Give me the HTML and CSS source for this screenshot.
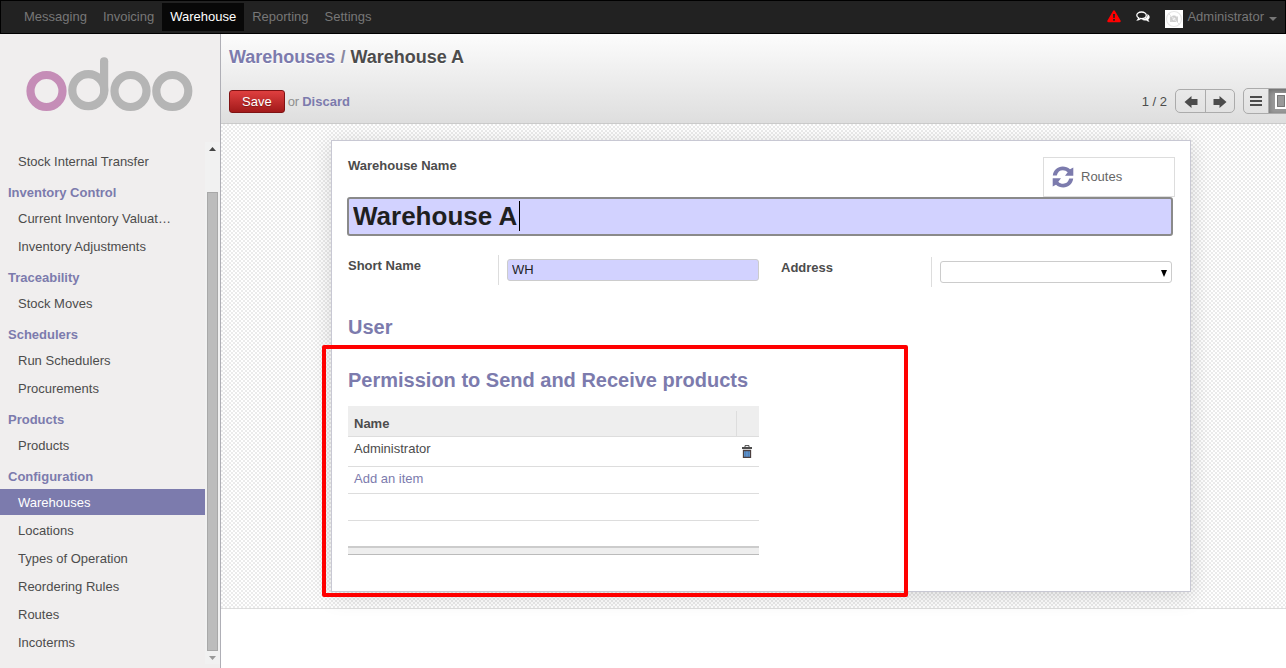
FILE: index.html
```html
<!DOCTYPE html>
<html lang="en">
<head>
<meta charset="utf-8">
<title>Warehouse A - Odoo</title>
<link rel="stylesheet" href="styles.css">
</head>
<body>
<header class="topbar">
  <nav class="topbar-menu" aria-label="Applications">
    <a href="#messaging">Messaging</a>
    <a href="#invoicing">Invoicing</a>
    <a href="#warehouse" class="active">Warehouse</a>
    <a href="#reporting">Reporting</a>
    <a href="#settings">Settings</a>
  </nav>
  <div class="systray">
    <button type="button" class="icon-btn" aria-label="Warnings">
      <svg width="14" height="14" viewBox="0 0 14 14"><path d="M7 .2Q7.600.2 8 1L13.700 10.800Q14 12.200 12.800 12.200H1.200Q0 12.200.3 10.800L6 1Q6.400.2 7 .2Z" fill="#f00"/><path d="M6 4H8L7.700 8H6.300ZM6.100 9H7.900V10.800H6.100Z" fill="#222"/></svg>
    </button>
    <button type="button" class="icon-btn" aria-label="Messages">
      <svg width="14" height="14" viewBox="0 0 14 14"><path d="M11.200 4C13 4.700 14 6 13.600 7.700Q13.300 8.800 12.300 9.500Q12.600 10.800 13.600 11.700Q11.800 11.700 10.400 10.400Q7.500 10.900 5.500 9.500Q9.500 9.400 11 7Q11.800 5.500 11.200 4Z" fill="#fff"/><path d="M5.500 2C8.300 2 10.300 3.400 10.300 5.300S8.300 8.600 5.500 8.600L4.500 8.500Q3.300 9.600 1.900 9.800Q2.600 9 2.700 7.900Q.8 7 .8 5.300C.8 3.400 2.800 2 5.500 2Z" fill="#222" stroke="#fff" stroke-width="1.300"/></svg>
    </button>
    <button type="button" class="user-btn">
      <svg class="avatar" width="18" height="18" viewBox="0 0 18 18"><rect width="18" height="18" fill="#fff"/><circle cx="9" cy="9" r="7.500" fill="none" stroke="#e6e6e6" stroke-width="1.200"/><path d="M5 6.500H7L7.700 5.500H10.300L11 6.500H13V12H5Z" fill="#d2d2d2"/><circle cx="9" cy="9" r="2" fill="#f4f4f4" stroke="#bbb" stroke-width=".6"/><path d="M3.700 3.700L14.300 14.300" stroke="#e6e6e6"/></svg>
      <span>Administrator</span>
      <svg class="caret" width="8" height="4" viewBox="0 0 8 4"><path d="M0 0H8L4 4Z" fill="#777"/></svg>
    </button>
  </div>
</header>

<div class="client">
  <aside class="sidebar">
    <a class="logo" href="#home" aria-label="Odoo">
      <svg width="168" height="56" viewBox="0 0 168 56" fill="none" stroke-width="8.200"><circle cx="20.500" cy="34" r="16" stroke="#c58db7"/><g stroke="#b5b5b5"><circle cx="62.300" cy="33.200" r="16"/><circle cx="104.500" cy="34" r="16"/><circle cx="146.300" cy="34" r="16"/><path d="M78.100 4.300V34" stroke-linecap="round"/></g></svg>
    </a>
    <div class="menu-scroll">
      <nav class="menu" aria-label="Warehouse">
        <a href="#transfer">Stock Internal Transfer</a>
        <h2>Inventory Control</h2>
        <a href="#valuation">Current Inventory Valuat…</a>
        <a href="#adjustments">Inventory Adjustments</a>
        <h2>Traceability</h2>
        <a href="#moves">Stock Moves</a>
        <h2>Schedulers</h2>
        <a href="#run">Run Schedulers</a>
        <a href="#procurements">Procurements</a>
        <h2>Products</h2>
        <a href="#products">Products</a>
        <h2>Configuration</h2>
        <a href="#warehouses" class="active">Warehouses</a>
        <a href="#locations">Locations</a>
        <a href="#types">Types of Operation</a>
        <a href="#rules">Reordering Rules</a>
        <a href="#routes">Routes</a>
        <a href="#incoterms">Incoterms</a>
      </nav>
      <div class="scrollbar" aria-hidden="true">
        <svg width="7" height="4" viewBox="0 0 7 4"><path d="M0 4L3.500 0L7 4Z" fill="#444"/></svg>
        <div class="thumb"></div>
        <svg width="7" height="4" viewBox="0 0 7 4"><path d="M0 0L3.500 4L7 0Z" fill="#999"/></svg>
      </div>
    </div>
  </aside>

  <main class="view">
    <div class="control-panel">
      <h1 class="breadcrumb"><a href="#warehouses">Warehouses</a> <span class="sep">/</span> Warehouse A</h1>
      <div class="actions">
        <div class="save-group">
          <button type="button" class="save">Save</button>
          <span class="or">or</span>
          <a href="#discard" class="discard">Discard</a>
        </div>
        <div class="pager">
          <span class="count">1 / 2</span>
          <div class="button-group">
            <button type="button" aria-label="Previous"><svg width="14" height="12" viewBox="0 0 14 12"><path d="M.5 6L7.500 0V3H13.500V9H7.500V12Z" fill="#4c4c4c"/></svg></button>
            <button type="button" aria-label="Next"><svg width="14" height="12" viewBox="0 0 14 12"><path d="M13.500 6L6.500 0V3H.5V9H6.500V12Z" fill="#4c4c4c"/></svg></button>
          </div>
          <div class="button-group switcher">
            <button type="button" aria-label="List view"><svg width="12" height="10" viewBox="0 0 12 10"><path d="M0 1H12M0 5H12M0 9H12" stroke="#4c4c4c" stroke-width="2"/></svg></button>
            <button type="button" class="on" aria-label="Form view"><svg width="13" height="18" viewBox="0 0 13 18"><path d="M2 2H12V16H2Z" fill="#999" stroke="#fff" stroke-width="2"/><path d="M3.500 3.500H10.500V14.500H3.500Z" fill="none" stroke="#777"/></svg></button>
          </div>
        </div>
      </div>
    </div>

    <div class="form-area">
      <form class="sheet">
        <div class="title-row">
          <label for="wh-name">Warehouse Name</label>
          <button type="button" class="stat">
            <svg width="22" height="22" viewBox="0 0 22 22" fill="#7c7bad"><path d="M.8 9.400C1.500 4 5.600.5 10.700.5C13.600.5 16 1.500 18 3.300L21.300 1.400V9.700H13L15.700 6.300C14.400 5 12.800 4.200 10.900 4.200C7.700 4.200 5.700 6 4.800 9.400Z"/><path d="M.8 9.400C1.500 4 5.600.5 10.700.5C13.600.5 16 1.500 18 3.300L21.300 1.400V9.700H13L15.700 6.300C14.400 5 12.800 4.200 10.900 4.200C7.700 4.200 5.700 6 4.800 9.400Z" transform="rotate(180 11 11)"/></svg>
            <span>Routes</span>
          </button>
        </div>
        <div class="title-field"><input id="wh-name" class="name-input" type="text" value="Warehouse A" autofocus><span class="text-cursor"></span></div>
        <div class="columns">
          <div class="field first">
            <label for="wh-code">Short Name</label>
            <div class="value"><input id="wh-code" class="code-input" type="text" value="WH"></div>
          </div>
          <div class="field second">
            <label for="wh-address">Address</label>
            <div class="value select-wrap"><select id="wh-address"><option></option></select><svg width="6" height="7" viewBox="0 0 6 7"><path d="M0 0H6L3 7Z" fill="#000"/></svg></div>
          </div>
        </div>
        <h2 class="section user-section">User</h2>
        <h2 class="section">Permission to Send and Receive products</h2>
        <table class="lines">
          <thead><tr><th>Name</th><th class="del" aria-label="Delete"><i></i></th></tr></thead>
          <tbody>
            <tr class="record"><td>Administrator</td><td class="del"><button type="button" class="trash" aria-label="Delete Administrator"><svg width="10" height="13" viewBox="0 0 10 13"><path d="M3 2V.600H7V2" fill="none" stroke="#4c4c4c"/><path d="M0 2H10V4H0Z" fill="#4c4c4c"/><path d="M1.500 5.500H8.500V12.300H1.500Z" fill="#5b9fe0" stroke="#4c4040" stroke-width="1.300"/><path d="M3.800 6V12M6.200 6V12" stroke="#557" stroke-width=".6"/></svg></button></td></tr>
            <tr><td colspan="2"><a href="#add">Add an item</a></td></tr>
            <tr><td colspan="2"></td></tr>
            <tr class="last"><td colspan="2"></td></tr>
          </tbody>
          <tfoot><tr><td colspan="2"></td></tr></tfoot>
        </table>
        <div class="highlight" aria-hidden="true"></div>
      </form>
    </div>
  </main>
</div>
</body>
</html>
```
FILE: styles.css
```css
* { box-sizing: border-box; }

body {
  margin: 0;
  height: 100vh;
  display: flex;
  flex-direction: column;
  overflow: hidden;
  background: #fff;
  color: #4c4c4c;
  font: 13px/18px "Liberation Sans", Arial, sans-serif;
}

a { color: #7c7bad; text-decoration: none; }
button { font: inherit; color: inherit; margin: 0; padding: 0; border: 0; background: none; }
input, select { font: inherit; margin: 0; }
svg { display: block; }
h1, h2 { margin: 0; }

/* Top bar */
.topbar {
  display: flex;
  justify-content: space-between;
  flex: none;
  height: 34px;
  padding: 2px 8px 2px 15px;
  background: #222;
  border: 1px solid #000;
}
.topbar-menu { display: flex; }
.topbar-menu a { padding: 5px 8px; color: #777; }
.topbar-menu .active { color: #fff; background: #080808; }
.systray { display: flex; align-items: center; gap: 15px; }
.user-btn { display: flex; align-items: center; gap: 4px; color: #777; }
.user-btn .avatar { margin-top: 4px; }
.user-btn .caret { margin: 4px 0 0 1px; }

.client { display: flex; flex: 1; min-height: 0; }

/* Sidebar */
.sidebar {
  display: flex;
  flex-direction: column;
  flex: none;
  width: 221px;
  background: #f0eeee;
  border-right: 1px solid #afafb6;
}
.logo { padding: 23px 26px 29px; }
.menu-scroll { display: flex; flex: 1; min-height: 0; margin-bottom: 4px; }
.menu { flex: 1; padding-top: 6px; overflow: hidden; }
.menu a {
  display: block;
  margin-bottom: 2px;
  padding: 5px 18px 3px;
  color: #4c4c4c;
  white-space: nowrap;
}
.menu h2 {
  padding: 8px 8px 3px;
  color: #7c7bad;
  font-size: 13px;
  line-height: 18px;
}
.menu .active { color: #fff; background: #7c7bad; }
.scrollbar {
  display: flex;
  flex-direction: column;
  align-items: center;
  width: 15px;
  padding: 5px 0 4px;
  background: #f1f1f1;
}
.thumb {
  flex: 1;
  width: 11px;
  margin: 41px 0 5px;
  background: #bcbcbc;
  border: 1px solid #a8a8a8;
}

/* The view runs slightly past the right edge of the window */
.view { flex: 1; min-width: 0; margin-right: -15px; }
.control-panel {
  height: 90px;
  padding: 12px 8px 10px;
  background: linear-gradient(#fcfcfc, #dedede);
  border-bottom: 1px solid #cacaca;
}
.breadcrumb { font-size: 18px; line-height: 22px; text-shadow: 0 1px 1px #fff; }
.breadcrumb .sep { color: #8a89a0; }
.actions { display: flex; justify-content: space-between; align-items: center; margin-top: 20px; }
.save-group { display: flex; align-items: center; gap: 3px; line-height: 20px; padding-top: 1px; }
.save {
  height: 23px;
  padding: 1px 12px 0;
  color: #fff;
  background: linear-gradient(#df3f3f, #a21a1a);
  border: 1px solid #7f1213;
  border-radius: 3px;
  text-shadow: 0 1px 1px rgba(0, 0, 0, .3);
}
.or { color: #8f8f8f; }
.discard { font-weight: bold; }
.pager { display: flex; align-items: center; }
.count { padding-top: 1px; }
.button-group {
  display: flex;
  height: 24px;
  margin-left: 8px;
  border: 1px solid #ababab;
  border-radius: 5px;
  overflow: hidden;
}
.button-group button { display: grid; place-items: center; width: 29px; padding-top: 2px; }
.button-group button + button { border-left: 1px solid #ababab; }
.switcher { height: 26px; }
.switcher button { width: 24px; padding-top: 0; }
.switcher .on { background: #999; box-shadow: inset 0 2px 5px rgba(0, 0, 0, .3); }

/* Form */
.form-area {
  padding: 16px;
  background: repeating-conic-gradient(#ebebeb 0 25%, #fff 0 50%) 0 0 / 4px 4px;
  border-bottom: 1px solid #ddd;
}
.sheet {
  position: relative;
  max-width: 860px;
  margin: 0 auto;
  padding: 16px 16px 36px;
  background: #fff;
  border: 1px solid #c8c8d3;
  box-shadow: 0 4px 20px rgba(0, 0, 0, .15);
}
.sheet label { font-weight: bold; }
.title-row { display: flex; justify-content: space-between; align-items: flex-start; margin-right: -1px; }
.stat {
  display: flex;
  align-items: center;
  gap: 7px;
  width: 132px;
  height: 40px;
  padding-left: 8px;
  color: #666;
  border: 1px solid #ddd;
}
.title-field { position: relative; margin: 0 1px 0 -1px; }
.name-input {
  display: block;
  width: 100%;
  height: 39px;
  padding: 0 4px;
  font-size: 26px;
  font-weight: bold;
  color: #1f1f1f;
  caret-color: transparent;
  background: #d2d2ff;
  border: 2px solid #8a8a8a;
  border-radius: 3px;
  outline: 0;
}
.text-cursor { position: absolute; left: 172px; top: 4px; width: 1px; height: 30px; background: #000; }
.columns { display: grid; grid-template-columns: 1fr 1fr; margin-top: 19px; }
.field { display: flex; }
.first { padding-right: 2px; }
.second { padding: 2px 2px 0 20px; }
.field label { flex: none; width: 150px; padding-top: 2px; }
.value { flex: 1; height: 30px; padding: 4px 0 4px 8px; border-left: 1px solid #ddd; }
.code-input, .value select {
  display: block;
  width: 100%;
  height: 22px;
  padding: 0 4px 2px;
  color: #1f1f1f;
  background: #d2d2ff;
  border: 1px solid #ccc;
  border-radius: 3px;
}
.value select { appearance: none; background: #fff; }
.select-wrap { position: relative; }
.select-wrap svg { position: absolute; right: 5px; top: 13px; pointer-events: none; }
.section { color: #7c7bad; font-size: 20px; line-height: 24px; }
.user-section { margin: 28px 0 29px; }

/* One2many list */
.lines {
  width: calc(50% - 2px);
  margin-top: 14px;
  border-collapse: separate;
  border-spacing: 0;
}
.lines th, .lines td { padding: 0 6px; text-align: left; vertical-align: top; border-bottom: 1px solid #ddd; }
.lines th { height: 31px; padding-top: 9px; background: #eee; }
.lines tbody td { height: 27px; padding-top: 3px; }
.lines .record td { height: 30px; }
.lines .del { width: 23px; padding-left: 0; }
.lines th.del { padding: 5px 0 0; }
.del i { display: block; height: 25px; border-left: 1px solid #ddd; }
.lines td.del { padding-top: 8px; }
.trash { display: block; margin-left: 6px; }
.lines .last td { height: 25px; border-bottom: 0; }
.lines tfoot td { height: 9px; background: #eee; border-top: 2px solid #ccc; border-bottom: 1px solid #bbb; }

/* Callout frame drawn over the user list */
.highlight {
  position: absolute;
  left: -10px;
  bottom: -6px;
  width: 586px;
  height: 252px;
  border: 4px solid #f00;
  border-radius: 2px;
  pointer-events: none;
}
```
